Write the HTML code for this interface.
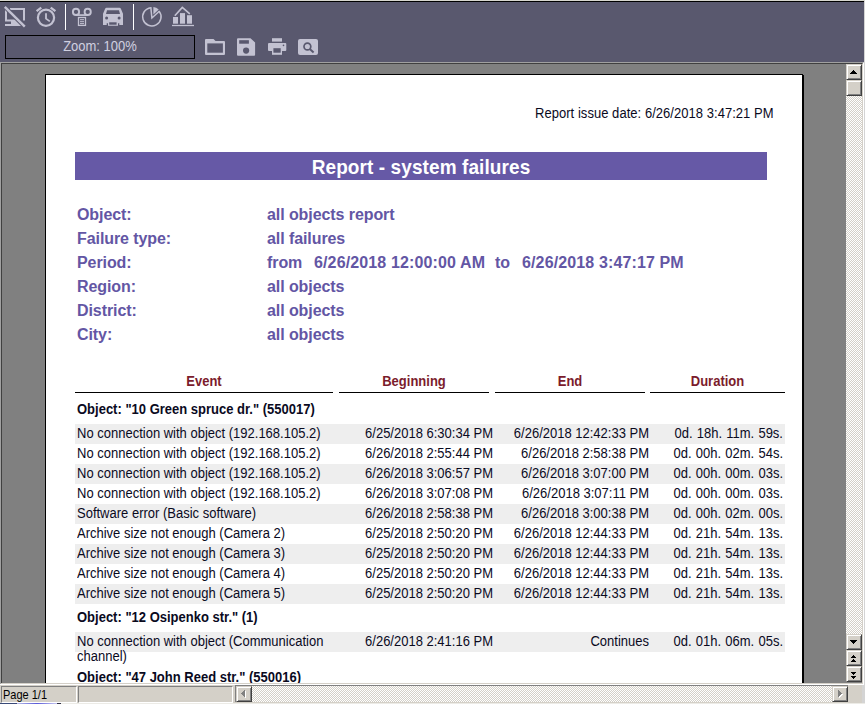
<!DOCTYPE html>
<html><head><meta charset="utf-8">
<style>
*{margin:0;padding:0;box-sizing:border-box}
html,body{width:865px;height:704px;overflow:hidden;background:#d4d4d4;font-family:"Liberation Sans",sans-serif}
.a{position:absolute}
#topline{left:0;top:0;width:865px;height:1px;background:#d6d6ce}
#blackline{left:0;top:1px;width:864px;height:1px;background:#000}
#toolbar{left:0;top:2px;width:864px;height:60px;background:#59586e}
.sep{width:1px;top:4px;height:26px;background:#fff}
#zoombox{left:5px;top:35px;width:190px;height:24px;border:1px solid #000;background:#5a596f;color:#d0d0e0;font-size:13px;line-height:22px;text-align:center}
#zoombox span{display:inline-block;transform:scaleY(1.1);transform-origin:0 15px}
#view{left:0;top:62px;width:864px;height:623px;background:#808080;border-top:1px solid #a0a0a0;border-left:1px solid #a0a0a0;border-right:1px solid #fff;border-bottom:1px solid #fff}
#view2{left:1px;top:63px;width:862px;height:621px;border-top:1px solid #404040;border-left:1px solid #404040;border-right:1px solid #d4d0c8;border-bottom:1px solid #d4d0c8}
#page{left:45px;top:74px;width:758px;height:609px;background:#fff;border-left:1px solid #000;border-top:1px solid #000;border-right:1px solid #000}
#pshadow{left:803px;top:75px;width:1px;height:608px;background:#000}
.t{position:absolute;white-space:nowrap;line-height:16px}
.sy{transform:scaleY(1.06);transform-origin:0 12px}
.info{font-size:16px;font-weight:bold;color:#6356a4;letter-spacing:-0.08px}
.hdr{font-size:13px;font-weight:bold;color:#7b1c2c;text-align:center}
.hl{position:absolute;height:1px;background:#000;top:392px}
.row{position:absolute;left:75px;width:710px;height:20px}
.g{background:#eeeeee}
.d{font-size:13px;color:#0a0a1e}
.grp{font-size:13px;font-weight:bold;color:#0a0a1e}
.r{text-align:right}
.btn{position:absolute;background:#d4d0c8;border-top:1px solid #d4d0c8;border-left:1px solid #d4d0c8;border-right:1px solid #404040;border-bottom:1px solid #404040;box-shadow:inset 1px 1px 0 #fff,inset -1px -1px 0 #808080}
.chk{position:absolute;background:conic-gradient(#d4d0c8 25%,#fff 0 50%,#d4d0c8 0 75%,#fff 0) 0 0/2px 2px}
#status{left:0;top:685px;width:862px;height:18px;background:#d4d0c8}
.panel{position:absolute;top:686px;height:17px;background:#d4d0c8;border-top:1px solid #808080;border-left:1px solid #808080;border-right:1px solid #fff;border-bottom:1px solid #fff}
</style></head><body>
<div class="a" id="topline"></div>
<div class="a" id="blackline"></div>
<div class="a" id="toolbar"></div>
<svg class="a" style="left:0;top:0" width="865" height="62" viewBox="0 0 865 62">
<g fill="none" stroke="#c3c2d2">
 <path d="M10 9h14v11.5" stroke-width="2"/>
 <path d="M6 10v10.5h13" stroke-width="2"/>
 <path d="M5 25h19" stroke-width="2"/>
 <circle cx="46" cy="17.8" r="8.1" stroke-width="2.2"/>
 <path d="M36.6 11.2L41.3 7.6M50.7 7.6L55.4 11.2" stroke-width="2.3"/>
 <path d="M46 13.3V18.6L49.8 21.4" stroke-width="1.8"/>
 <circle cx="76" cy="11.9" r="3.1" stroke-width="1.9"/>
 <circle cx="87.7" cy="11.9" r="3.1" stroke-width="1.9"/>
 <path d="M76 15.1H87.7" stroke-width="1.7"/>
 <rect x="78.5" y="17.5" width="7" height="7.9" stroke-width="1.3"/>
 <path d="M80 19.7h4M80 21.7h4M80 23.6h4" stroke-width="1"/>
 <path d="M150.8 7.65A9.2 9.2 0 1 0 159.1 11.1" stroke-width="1.5"/>
 <path d="M174.8 15.8L182.3 7.4L189.8 13.8" stroke-width="1.6"/>
 <path d="M172 25.5H194" stroke-width="1.3"/>
</g>
<g fill="#c3c2d2">
 <rect x="11" y="21" width="8" height="3"/>
 <path d="M104 24L16 7.5"/>
 <path d="M106.5 7.8h13q1 0 1.5 1.2l2 4.8v11.1h-3.7v-1.6h-1.3v2.5h-10v-2.5h-1.3v1.6h-3.7v-11.1l2-4.8q0.5-1.2 1.5-1.2z"/>
 <rect x="173" y="17" width="5" height="6.7"/>
 <rect x="180" y="13.1" width="5" height="10.6"/>
 <rect x="187" y="15.2" width="5" height="8.5"/>
 <path d="M153.4 6.9A10 10 0 0 1 158.7 9.4L153.4 14.4z"/>
 <path d="M205 40q0-1 1-1h7.5l2 2h8.5q1 0 1 1v12q0 1-1 1h-18q-1 0-1-1z"/>
 <path d="M238 38.2h12.5l4.6 4.4v12.2q0 1-1 1h-16.1q-1 0-1-1v-15.6q0-1 1-1z"/>
 <rect x="272" y="38.2" width="10" height="3.4"/>
 <rect x="268" y="43" width="18.3" height="8" rx="1"/>
 <rect x="272" y="47.5" width="10" height="7.3"/>
 <rect x="298" y="39" width="20" height="16" rx="2"/>
</g>
<g fill="#59586e">
 <path d="M107 10.3h12l1 3.7h-14z"/>
 <circle cx="106.6" cy="18" r="1.5"/>
 <circle cx="119.1" cy="18" r="1.5"/>
 <rect x="109.2" y="22.3" width="7.4" height="2.4"/>
 <rect x="207.3" y="43.4" width="15.6" height="9.3"/>
 <rect x="239.2" y="40.2" width="9.7" height="3.5"/>
 <circle cx="246.1" cy="50.6" r="3.1"/>
 <rect x="273.4" y="48.2" width="7.3" height="4.5"/>
 <circle cx="283.5" cy="45.4" r="0.8"/>
</g>
<g fill="none" stroke="#59586e">
 <path d="M4.2 6.2L25.2 27.2" stroke-width="4.3"/>
 <circle cx="307.4" cy="46.5" r="3.4" stroke-width="1.7"/>
 <path d="M309.8 49L313.6 52.4" stroke-width="2"/>
</g>
<g fill="none" stroke="#c3c2d2">
 <path d="M4.8 6.8L24.8 26.6" stroke-width="2.4"/>
 <path d="M150.8 7.2L151.9 18L159.6 11" stroke-width="1.5"/>
</g>
</svg>
<div class="a sep" style="left:65px"></div>
<div class="a sep" style="left:133px"></div>
<div class="a" id="zoombox"><span>Zoom: 100%</span></div>

<div class="a" id="view"></div>
<div class="a" id="view2"></div>
<div class="a" id="page"></div>
<div class="a" id="pshadow"></div>

<!-- report header -->
<div class="t d sy" style="left:535px;top:106px;letter-spacing:0.04px">Report issue date: 6/26/2018 3:47:21 PM</div>
<div class="a" style="left:75px;top:152px;width:692px;height:28px;background:#6659a6"></div>
<div class="t" style="left:75px;top:158px;width:692px;text-align:center;font-size:19px;font-weight:bold;color:#fff;line-height:20px;letter-spacing:0.09px;transform:scaleY(1.077);transform-origin:0 16px">Report - system failures</div>

<div class="t info" style="left:77px;top:207px">Object:</div>
<div class="t info" style="left:77px;top:231px">Failure type:</div>
<div class="t info" style="left:77px;top:255px">Period:</div>
<div class="t info" style="left:77px;top:279px">Region:</div>
<div class="t info" style="left:77px;top:303px">District:</div>
<div class="t info" style="left:77px;top:327px">City:</div>
<div class="t info" style="left:267px;top:207px">all objects report</div>
<div class="t info" style="left:267px;top:231px">all failures</div>
<div class="t info" style="left:267px;top:255px">from</div>
<div class="t info" style="letter-spacing:0.13px;left:314px;top:255px">6/26/2018 12:00:00 AM</div>
<div class="t info" style="left:495px;top:255px">to</div>
<div class="t info" style="letter-spacing:0.13px;left:522px;top:255px">6/26/2018 3:47:17 PM</div>
<div class="t info" style="left:267px;top:279px">all objects</div>
<div class="t info" style="left:267px;top:303px">all objects</div>
<div class="t info" style="left:267px;top:327px">all objects</div>

<!-- table header -->
<div class="t hdr sy" style="left:75px;width:258px;top:374px">Event</div>
<div class="t hdr sy" style="left:339px;width:150px;top:374px">Beginning</div>
<div class="t hdr sy" style="left:495px;width:150px;top:374px">End</div>
<div class="t hdr sy" style="left:650px;width:135px;top:374px">Duration</div>
<div class="hl" style="left:75px;width:258px"></div>
<div class="hl" style="left:339px;width:150px"></div>
<div class="hl" style="left:495px;width:150px"></div>
<div class="hl" style="left:650px;width:135px"></div>

<!--ROWS-->
<div class="t grp sy" style="left:77px;top:402px">Object: "10 Green spruce dr." (550017)</div>
<div class="row g" style="top:424px"></div>
<div class="t d sy" style="left:77px;top:426px">No connection with object (192.168.105.2)</div>
<div class="t d r sy" style="left:301px;width:192px;top:426px">6/25/2018 6:30:34 PM</div>
<div class="t d r sy" style="left:457px;width:192px;top:426px">6/26/2018 12:42:33 PM</div>
<div class="t d r sy" style="left:600px;width:183px;word-spacing:0.6px;top:426px">0d. 18h. 11m. 59s.</div>
<div class="t d sy" style="left:77px;top:446px">No connection with object (192.168.105.2)</div>
<div class="t d r sy" style="left:301px;width:192px;top:446px">6/26/2018 2:55:44 PM</div>
<div class="t d r sy" style="left:457px;width:192px;top:446px">6/26/2018 2:58:38 PM</div>
<div class="t d r sy" style="left:600px;width:183px;word-spacing:0.6px;top:446px">0d. 00h. 02m. 54s.</div>
<div class="row g" style="top:464px"></div>
<div class="t d sy" style="left:77px;top:466px">No connection with object (192.168.105.2)</div>
<div class="t d r sy" style="left:301px;width:192px;top:466px">6/26/2018 3:06:57 PM</div>
<div class="t d r sy" style="left:457px;width:192px;top:466px">6/26/2018 3:07:00 PM</div>
<div class="t d r sy" style="left:600px;width:183px;word-spacing:0.6px;top:466px">0d. 00h. 00m. 03s.</div>
<div class="t d sy" style="left:77px;top:486px">No connection with object (192.168.105.2)</div>
<div class="t d r sy" style="left:301px;width:192px;top:486px">6/26/2018 3:07:08 PM</div>
<div class="t d r sy" style="left:457px;width:192px;top:486px">6/26/2018 3:07:11 PM</div>
<div class="t d r sy" style="left:600px;width:183px;word-spacing:0.6px;top:486px">0d. 00h. 00m. 03s.</div>
<div class="row g" style="top:504px"></div>
<div class="t d sy" style="left:77px;top:506px">Software error (Basic software)</div>
<div class="t d r sy" style="left:301px;width:192px;top:506px">6/26/2018 2:58:38 PM</div>
<div class="t d r sy" style="left:457px;width:192px;top:506px">6/26/2018 3:00:38 PM</div>
<div class="t d r sy" style="left:600px;width:183px;word-spacing:0.6px;top:506px">0d. 00h. 02m. 00s.</div>
<div class="t d sy" style="left:77px;top:526px">Archive size not enough (Camera 2)</div>
<div class="t d r sy" style="left:301px;width:192px;top:526px">6/25/2018 2:50:20 PM</div>
<div class="t d r sy" style="left:457px;width:192px;top:526px">6/26/2018 12:44:33 PM</div>
<div class="t d r sy" style="left:600px;width:183px;word-spacing:0.6px;top:526px">0d. 21h. 54m. 13s.</div>
<div class="row g" style="top:544px"></div>
<div class="t d sy" style="left:77px;top:546px">Archive size not enough (Camera 3)</div>
<div class="t d r sy" style="left:301px;width:192px;top:546px">6/25/2018 2:50:20 PM</div>
<div class="t d r sy" style="left:457px;width:192px;top:546px">6/26/2018 12:44:33 PM</div>
<div class="t d r sy" style="left:600px;width:183px;word-spacing:0.6px;top:546px">0d. 21h. 54m. 13s.</div>
<div class="t d sy" style="left:77px;top:566px">Archive size not enough (Camera 4)</div>
<div class="t d r sy" style="left:301px;width:192px;top:566px">6/25/2018 2:50:20 PM</div>
<div class="t d r sy" style="left:457px;width:192px;top:566px">6/26/2018 12:44:33 PM</div>
<div class="t d r sy" style="left:600px;width:183px;word-spacing:0.6px;top:566px">0d. 21h. 54m. 13s.</div>
<div class="row g" style="top:584px"></div>
<div class="t d sy" style="left:77px;top:586px">Archive size not enough (Camera 5)</div>
<div class="t d r sy" style="left:301px;width:192px;top:586px">6/25/2018 2:50:20 PM</div>
<div class="t d r sy" style="left:457px;width:192px;top:586px">6/26/2018 12:44:33 PM</div>
<div class="t d r sy" style="left:600px;width:183px;word-spacing:0.6px;top:586px">0d. 21h. 54m. 13s.</div>
<div class="t grp sy" style="left:77px;top:610px">Object: "12 Osipenko str." (1)</div>
<div class="row g" style="top:632px"></div>
<div class="t d sy" style="left:77px;top:634px">No connection with object (Communication</div>
<div class="t d sy" style="left:77px;top:649px">channel)</div>
<div class="t d r sy" style="left:301px;width:192px;top:634px">6/26/2018 2:41:16 PM</div>
<div class="t d r sy" style="left:457px;width:192px;top:634px">Continues</div>
<div class="t d r sy" style="left:600px;width:183px;word-spacing:0.6px;top:634px">0d. 01h. 06m. 05s.</div>
<div class="t grp sy" style="left:77px;top:670px">Object: "47 John Reed str." (550016)</div>
<!--/ROWS-->

<!-- vertical scrollbar -->
<div class="chk" style="left:846px;top:96px;width:16px;height:538px"></div>
<div class="btn" style="left:846px;top:64px;width:16px;height:16px"></div>
<div class="btn" style="left:846px;top:80px;width:16px;height:16px"></div>
<div class="btn" style="left:846px;top:634px;width:16px;height:16px"></div>
<div class="btn" style="left:846px;top:650px;width:16px;height:16px"></div>
<div class="btn" style="left:846px;top:666px;width:16px;height:16px"></div>

<!-- status / horizontal scrollbar -->
<div class="a" style="left:1px;top:683px;width:862px;height:1px;background:#d4d0c8"></div>
<div class="a" style="left:0;top:684px;width:864px;height:1px;background:#fff"></div>
<div class="a" id="status"></div>
<div class="panel" style="left:1px;width:76px"></div>
<div class="t" style="left:3px;top:689px;font-size:11px;line-height:12px;color:#000;transform:scaleY(1.125);transform-origin:0 10px">Page 1/1</div>
<div class="panel" style="left:78px;width:155px"></div>
<div class="a" style="left:235px;top:685px;width:613px;height:17px;border-top:1px solid #808080;border-left:1px solid #808080"></div>
<div class="chk" style="left:252px;top:686px;width:580px;height:16px"></div>
<div class="btn" style="left:236px;top:686px;width:16px;height:16px"></div>
<div class="btn" style="left:832px;top:686px;width:16px;height:16px"></div>
<svg class="a" style="left:0;top:0" width="865" height="704" viewBox="0 0 865 704" shape-rendering="crispEdges"><g fill="#000"><rect x="853" y="70" width="1" height="1"/><rect x="852" y="71" width="3" height="1"/><rect x="851" y="72" width="5" height="1"/><rect x="850" y="73" width="7" height="1"/><rect x="850" y="640" width="7" height="1"/><rect x="851" y="641" width="5" height="1"/><rect x="852" y="642" width="3" height="1"/><rect x="853" y="643" width="1" height="1"/><rect x="853" y="655" width="1" height="1"/><rect x="852" y="656" width="3" height="1"/><rect x="851" y="657" width="5" height="1"/><rect x="853" y="659" width="1" height="1"/><rect x="852" y="660" width="3" height="1"/><rect x="851" y="661" width="5" height="1"/><rect x="851" y="672" width="5" height="1"/><rect x="852" y="673" width="3" height="1"/><rect x="853" y="674" width="1" height="1"/><rect x="851" y="676" width="5" height="1"/><rect x="852" y="677" width="3" height="1"/><rect x="853" y="678" width="1" height="1"/></g><rect x="242" y="694" width="1" height="1" fill="#fff"/><rect x="243" y="693" width="1" height="3" fill="#fff"/><rect x="244" y="692" width="1" height="5" fill="#fff"/><rect x="245" y="691" width="1" height="7" fill="#fff"/><rect x="241" y="693" width="1" height="1" fill="#808080"/><rect x="242" y="692" width="1" height="3" fill="#808080"/><rect x="243" y="691" width="1" height="5" fill="#808080"/><rect x="244" y="690" width="1" height="7" fill="#808080"/><rect x="839" y="691" width="1" height="7" fill="#fff"/><rect x="840" y="692" width="1" height="5" fill="#fff"/><rect x="841" y="693" width="1" height="3" fill="#fff"/><rect x="842" y="694" width="1" height="1" fill="#fff"/><rect x="838" y="690" width="1" height="7" fill="#808080"/><rect x="839" y="691" width="1" height="5" fill="#808080"/><rect x="840" y="692" width="1" height="3" fill="#808080"/><rect x="841" y="693" width="1" height="1" fill="#808080"/></svg>
<div class="a" style="left:0;top:703px;width:865px;height:1px;background:#ecebe6"></div>
<div class="a" style="left:0;top:703px;width:17px;height:1px;background:#3a4a78"></div>
<div class="a" style="left:17px;top:703px;width:40px;height:1px;background:linear-gradient(90deg,#b8bce8,#5a5ad8 50%,#c8c8f0)"></div>
<div class="a" style="left:57px;top:703px;width:4px;height:1px;background:#303048"></div>
</body></html>
